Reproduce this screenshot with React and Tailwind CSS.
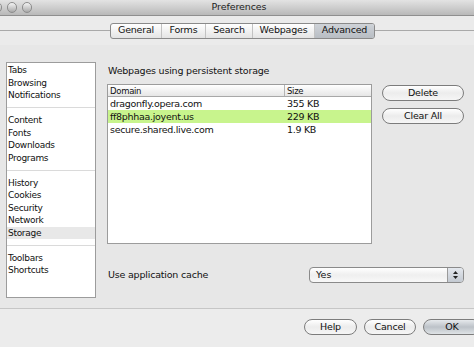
const font = { fontFamily: '"Lucida Grande", "DejaVu Sans", sans-serif' };

const sections = [
  ["Tabs", "Browsing", "Notifications"],
  ["Content", "Fonts", "Downloads", "Programs"],
  ["History", "Cookies", "Security", "Network", "Storage"],
  ["Toolbars", "Shortcuts"],
];

const tabs = [
  ["General", "w-[50px]"],
  ["Forms", "w-[44px]"],
  ["Search", "w-[47px]"],
  ["Webpages", "w-[62px]"],
  ["Advanced", "w-[60px]"],
];

const rows = [
  ["dragonfly.opera.com", "355 KB", false],
  ["ff8phhaa.joyent.us", "229 KB", true],
  ["secure.shared.live.com", "1.9 KB", false],
];

function Light() {
  return (
    <div className="w-[11px] h-[11px] rounded-full border border-[#8d8d8d] bg-gradient-to-b from-[#f4f4f4] to-[#a9a9a9]" />
  );
}

function AquaButton({ label, className = "", primary = false }) {
  return (
    <div
      className={`h-[16px] rounded-full border border-[#7c7c7c] flex items-center justify-center text-[9.5px] tracking-[-0.2px] text-[#111] ${
        primary
          ? "bg-gradient-to-b from-[#e6e9ec] via-[#bcc2c8] to-[#dfe3e6]"
          : "bg-gradient-to-b from-[#ffffff] via-[#ececec] to-[#f6f6f6]"
      } ${className}`}
    >
      {label}
    </div>
  );
}

export default function App() {
  return (
    <div
      className="w-[474px] h-[347px] overflow-hidden flex flex-col bg-[#e7e7e7] text-[#111]"
      style={font}
    >
      {/* title bar */}
      <div className="h-[16px] shrink-0 flex items-center bg-gradient-to-b from-[#e3e3e3] to-[#b9b9b9] border-b border-[#8f8f8f]">
        <div className="flex gap-[5px] ml-[-8px] w-[40px]">
          <Light />
          <Light />
          <Light />
        </div>
        <div className="flex-1 text-center text-[9.5px] tracking-[-0.1px] text-[#222] pr-[28px]">Preferences</div>
      </div>

      {/* toolbar with segmented control */}
      <div className="h-[29px] shrink-0 flex items-center bg-[#ebebeb]">
        <div className="w-[110px] h-px bg-[#a9a9a9]" />
        <div className="flex h-[16px] rounded-[3px] border border-[#8a8a8a] overflow-hidden bg-gradient-to-b from-[#ffffff] to-[#e4e4e4]">
          {tabs.map(([t, w], i) => (
            <div
              key={t}
              className={`${w} flex items-center justify-center text-[9.5px] tracking-[-0.2px] ${
                i > 0 ? "border-l border-[#c2c2c2]" : ""
              } ${t === "Advanced" ? "bg-gradient-to-b from-[#cfd3d8] to-[#b8bdc3]" : ""}`}
            >
              {t}
            </div>
          ))}
        </div>
        <div className="flex-1 h-px bg-[#a9a9a9]" />
      </div>

      {/* main */}
      <div className="flex-1 flex pl-[6px] pt-[17px] border-b border-[#c6c6c6]">
        <div className="w-[90px] h-[236px] bg-white border border-[#9c9c9c] pt-[1px] text-[9px] tracking-[-0.3px]">
          {sections.map((sec, si) => (
            <div key={si}>
              {si > 0 && (
                <div className="h-[12.5px] flex items-center">
                  <div className="w-full h-px bg-[#dadada]" />
                </div>
              )}
              {sec.map((item) => (
                <div
                  key={item}
                  className={`h-[12.5px] leading-[12.5px] pl-[1px] ${
                    item === "Storage" ? "bg-[#e8e8e8]" : ""
                  }`}
                >
                  {item}
                </div>
              ))}
            </div>
          ))}
        </div>

        <div className="ml-[11px] flex flex-col">
          <div className="h-[16px] mt-[1px] flex items-center text-[9.5px] tracking-[-0.2px] pl-[1px]">
            Webpages using persistent storage
          </div>
          <div className="flex mt-[5px]">
            <div className="w-[265px] h-[160px] bg-white border border-[#9c9c9c] text-[9.5px] tracking-[-0.3px]">
              <div className="flex h-[12px] bg-gradient-to-b from-[#ffffff] to-[#e6e6e6] border-b border-[#a8a8a8] text-[8.5px]">
                <div className="w-[177px] pl-[2px] leading-[12px] border-r border-[#b5b5b5]">Domain</div>
                <div className="flex-1 pl-[2px] leading-[12px]">Size</div>
              </div>
              {rows.map(([d, s, hl]) => (
                <div key={d} className={`flex h-[13px] leading-[13px] ${hl ? "bg-[#c8f48d]" : ""}`}>
                  <div className="w-[177px] pl-[2px]">{d}</div>
                  <div className="flex-1 pl-[2px]">{s}</div>
                </div>
              ))}
            </div>
            <div className="ml-[10px] mt-[1px] flex flex-col gap-[7px] w-[82px]">
              <AquaButton label="Delete" />
              <AquaButton label="Clear All" />
            </div>
          </div>
          <div className="flex items-center mt-[23px]">
            <div className="w-[202px] text-[9.5px] tracking-[-0.2px] pl-[1px]">Use application cache</div>
            <div className="w-[155px] h-[16px] rounded-[4px] border border-[#8a8a8a] flex overflow-hidden bg-gradient-to-b from-[#ffffff] via-[#efefef] to-[#f8f8f8]">
              <div className="flex-1 pl-[6px] text-[9.5px] leading-[14px]">Yes</div>
              <div className="w-[16px] border-l border-[#9a9a9a] bg-gradient-to-b from-[#e4e8ee] to-[#c3c9d1] flex items-center justify-center">
                <svg width="7" height="10" viewBox="0 0 7 10">
                  <path d="M3.5 1 L6 4 L1 4 Z" fill="#222" />
                  <path d="M3.5 9 L6 6 L1 6 Z" fill="#222" />
                </svg>
              </div>
            </div>
          </div>
        </div>
      </div>

      {/* footer */}
      <div className="h-[38px] shrink-0 bg-[#ececec] flex pl-[304px] pt-[10px] gap-[7px] overflow-hidden">
        <AquaButton label="Help" className="w-[53px] shrink-0" />
        <AquaButton label="Cancel" className="w-[52px] shrink-0" />
        <AquaButton label="OK" primary className="w-[58px] shrink-0" />
      </div>
    </div>
  );
}
